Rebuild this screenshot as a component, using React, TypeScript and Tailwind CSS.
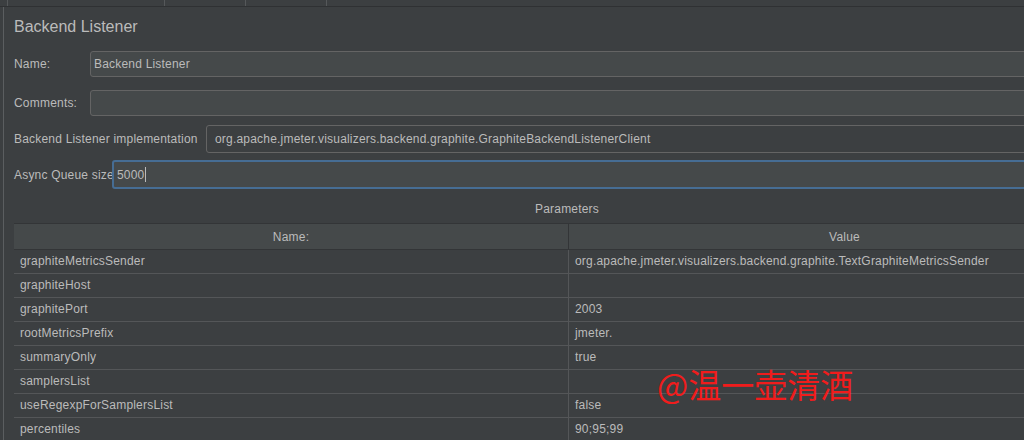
const params = [
  { name: "graphiteMetricsSender", value: "org.apache.jmeter.visualizers.backend.graphite.TextGraphiteMetricsSender" },
  { name: "graphiteHost", value: "" },
  { name: "graphitePort", value: "2003" },
  { name: "rootMetricsPrefix", value: "jmeter." },
  { name: "summaryOnly", value: "true" },
  { name: "samplersList", value: "" },
  { name: "useRegexpForSamplersList", value: "false" },
  { name: "percentiles", value: "90;95;99" },
];

export default function App() {
  return (
    <div className="relative w-[1024px] h-[440px] overflow-hidden bg-[#3c3f41] font-['Liberation_Sans',Arial,sans-serif] text-[12px] tracking-[0.2px] text-[#bbbbbb]">
      {/* tab strip */}
      <div className="flex h-[7px] border-b border-[#2f3133]">
        <div className="w-[8px] border-r border-[#55585a]" />
        <div className="w-[157px] border-r border-[#55585a]" />
        <div className="w-[81px] border-r border-[#55585a]" />
        <div className="w-[81px] border-r border-[#55585a]" />
      </div>

      <div className="flex">
        <div className="w-[3px] shrink-0" />
        <div className="w-[1px] shrink-0 h-[433px] bg-[#5b5e60]" />

        <div className="pl-[10px] w-[1200px] shrink-0">
          {/* title */}
          <div className="mt-[10px] h-[20px] leading-[20px] text-[16px] tracking-normal">Backend Listener</div>

          {/* Name */}
          <div className="mt-[14px] flex h-[26px]">
            <div className="w-[76px] shrink-0 flex items-center whitespace-nowrap">Name:</div>
            <div className="flex-1 flex items-center px-[3px] bg-[#45494a] border border-[#646464] rounded-[3px]">
              Backend Listener
            </div>
          </div>

          {/* Comments */}
          <div className="mt-[13px] flex h-[26px]">
            <div className="w-[76px] shrink-0 flex items-center whitespace-nowrap">Comments:</div>
            <div className="flex-1 bg-[#45494a] border border-[#646464] rounded-[3px]" />
          </div>

          {/* implementation */}
          <div className="mt-[9px] flex h-[28px]">
            <div className="w-[192px] shrink-0 flex items-center whitespace-nowrap">Backend Listener implementation</div>
            <div className="flex-1 flex items-center px-[8px] bg-[#3c3f41] border border-[#646464] rounded-[3px]">
              org.apache.jmeter.visualizers.backend.graphite.GraphiteBackendListenerClient
            </div>
          </div>

          {/* Async queue */}
          <div className="mt-[7px] flex h-[29px]">
            <div className="w-[98px] shrink-0 flex items-center whitespace-nowrap">Async Queue size</div>
            <div className="flex-1 flex items-center px-[3px] bg-[#45494a] border-2 border-[#466d94] rounded-[3px]">
              5000
              <span className="w-px h-[15px] bg-[#bbbbbb]" />
            </div>
          </div>

          {/* Parameters */}
          <div className="h-[34px] w-[1106px] flex items-end justify-center pb-[5px]">Parameters</div>

          {/* table */}
          <div className="w-[1106px]">
            <div className="flex h-[27px] bg-[#45494a] border-t border-b border-[#333537]">
              <div className="w-[555px] flex items-center justify-center border-r border-[#333537]">Name:</div>
              <div className="flex-1 flex items-center justify-center">Value</div>
            </div>
            {params.map((p) => (
              <div key={p.name} className="flex h-[24px] border-b border-[#545658]">
                <div className="w-[555px] flex items-center pl-[6px] pb-[1px] border-r border-[#545658]">{p.name}</div>
                <div className="flex-1 flex items-center pl-[6px] pb-[1px]">{p.value}</div>
              </div>
            ))}
          </div>
        </div>
      </div>

      {/* watermark */}
      <div className="absolute left-[657px] top-[364px] text-[33px] leading-[40px] tracking-normal text-[#f01c1c] font-['Noto_Sans_CJK_SC',sans-serif]">
        @温一壶清酒
      </div>
    </div>
  );
}
